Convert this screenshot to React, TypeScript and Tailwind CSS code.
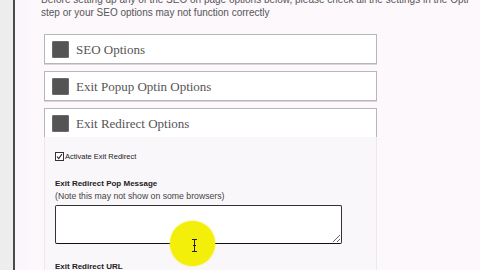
import { useState } from "react";

const sections = ["SEO Options", "Exit Popup Optin Options", "Exit Redirect Options"];

function SectionHeader({ title }: { title: string }) {
  return (
    <div className="flex h-[30px] items-center gap-[7px] border border-[#b9b6b9] bg-white pl-[7px] shadow-[0_1px_0_#d8d5d8]">
      <div className="h-[17px] w-[17px] rounded-[1px] border border-[#6a6a6a] bg-[#555455]" />
      <span className="font-['Liberation_Serif',serif] text-[13px] leading-none text-[#555]">{title}</span>
    </div>
  );
}

export default function App() {
  const [active, setActive] = useState(true);

  return (
    <div className="flex h-[270px] w-[480px] overflow-hidden bg-[#fcf8fc] font-['Liberation_Sans',Arial,sans-serif]">
      <div className="w-[13px] shrink-0 bg-[#eeedee]" />
      <div className="w-[2px] shrink-0 bg-[#4a4a4a]" />
      <div className="w-[13px] shrink-0 bg-[#fbf6fb]" />
      <div className="flex-1 pl-[13px]">
        <p className="-mt-[7px] w-[460px] text-[10px] leading-[13px] text-[#555]">
          Before setting up any of the SEO on page options below, please check all the settings in the Opti
          <br />
          step or your SEO options may not function correctly
        </p>

        <div className="ml-[3px] mt-[15px] flex w-[333px] flex-col gap-[7px]">
          {sections.map((s) => (
            <SectionHeader key={s} title={s} />
          ))}
        </div>

        <div className="relative ml-[3px] -mt-[1px] flex h-[140px] w-[333px] flex-col border-x border-[#ece9ec] bg-[#faf7fa] pl-[10px]">
          <label className="mt-[15px] flex cursor-pointer items-center text-[7.5px] leading-[9px] text-[#222]">
            <span
              onClick={() => setActive(!active)}
              className="mr-[1px] flex h-[9px] w-[9px] items-center justify-center border border-[#333] bg-white"
            >
              {active && (
                <svg width="7" height="7" viewBox="0 0 7 7">
                  <path d="M1 3.5l1.7 2L6 1" stroke="#222" strokeWidth="1.1" fill="none" />
                </svg>
              )}
            </span>
            Activate Exit Redirect
          </label>

          <div className="mt-[18px] text-[8px] font-bold leading-[10px] text-[#222]">Exit Redirect Pop Message</div>
          <div className="mt-[2px] text-[8.7px] leading-[11px] text-[#444]">(Note this may not show on some browsers)</div>

          <textarea className="mt-[3px] h-[39px] w-[287px] resize rounded-[2px] border border-[#333] border-b-[#111] bg-white" />

          <div className="mt-[18px] text-[8px] font-bold leading-[10px] text-[#222]">Exit Redirect URL</div>

          <div className="pointer-events-none absolute left-[125px] top-[84px] flex h-[45px] w-[45px] items-center justify-center rounded-full bg-[#f3ee0a] shadow-[0_0_2px_#f3ee0a]">
            <svg width="7" height="13" viewBox="0 0 7 13" className="ml-[3px] mt-[3px]">
              <path d="M1 0.5h5M3.5 0.5v12M1 12.5h5M2 6.5h3" stroke="#222" strokeWidth="1" fill="none" />
            </svg>
          </div>
        </div>
      </div>
    </div>
  );
}
